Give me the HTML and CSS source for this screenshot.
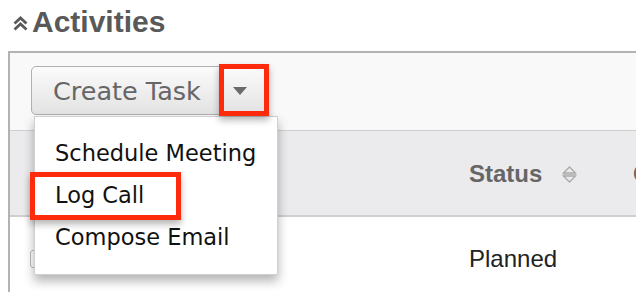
FILE: index.html
```html
<!DOCTYPE html>
<html>
<head>
<meta charset="utf-8">
<link rel="stylesheet" href="styles.css">
</head>
<body>
<div class="page">
  <h2 class="title">
    <svg class="chev" width="15" height="15" viewBox="0 0 15 15"><path d="M1.5 7.5 L7.5 2 L13.5 7.5 M1.5 13.5 L7.5 8 L13.5 13.5" fill="none" stroke="#5a5a5a" stroke-width="2.8"/></svg>
    <span>Activities</span>
  </h2>
  <div class="panel">
    <div class="toolbar">
      <div class="btn-group">
        <div class="btn">
          <span class="btn-label">Create Task</span>
          <span class="btn-caret"><svg width="14" height="8" viewBox="0 0 14 8"><path d="M0 0 H14 L7 8 Z" fill="#6a6a6a"/></svg></span>
        </div>
        <ul class="menu">
          <li>Schedule Meeting</li>
          <li>Log Call</li>
          <li>Compose Email</li>
        </ul>
        <div class="mark mark-caret"></div>
        <div class="mark mark-log"></div>
      </div>
    </div>
    <div class="thead">
      <div class="cell"></div>
      <div class="cell th">Status
        <svg class="sort" width="17" height="19" viewBox="0 0 17 19"><path d="M2.5 8 L8.5 2 L14.5 8 Z M2.5 11 L8.5 17 L14.5 11 Z" fill="none" stroke="#aaa" stroke-width="1.3"/><path d="M2 9.5 H15" stroke="#bbb" stroke-width="1"/></svg>
      </div>
      <div class="cell th">Contact</div>
    </div>
    <div class="trow">
      <div class="cell"><span class="check"></span></div>
      <div class="cell td">Planned</div>
      <div class="cell td"></div>
    </div>
  </div>
</div>
</body>
</html>
```
FILE: styles.css
```css
html, body {
  margin: 0;
  padding: 0;
  background: #fff;
}
.page {
  width: 636px;
  height: 292px;
  overflow: hidden;
}
.title {
  margin: 0;
  height: 51px;
  display: flex;
  align-items: center;
  gap: 4px;
  padding-left: 13px;
  padding-bottom: 7px;
  box-sizing: border-box;
  font-family: "Liberation Sans", Arial, sans-serif;
  font-weight: bold;
  font-size: 30px;
  color: #595959;
}
.chev {
  display: block;
  margin-top: 3px;
}
.panel {
  margin-left: 8px;
  border-left: 2px solid #b3b3b3;
  border-top: 2px solid #b3b3b3;
}
.toolbar {
  background: #f9f9f9;
  height: 77px;
  padding: 13px 0 0 21px;
  box-sizing: border-box;
}
.btn-group {
  position: relative;
  width: 235px;
}
.btn {
  display: flex;
  align-items: center;
  height: 49px;
  box-sizing: border-box;
  border: 1px solid #b0b0b0;
  border-radius: 5px;
  background: linear-gradient(#fbfbfb, #e3e3e3);
  font-family: "DejaVu Sans", "Lucida Grande", sans-serif;
  font-size: 25.5px;
  color: #666;
  white-space: nowrap;
}
.btn-label {
  padding-left: 21px;
  width: 188px;
  box-sizing: border-box;
}
.btn-caret {
  flex: 1;
  display: flex;
  justify-content: center;
  padding-right: 6px;
}
.btn-caret svg { display: block; }
.menu {
  position: absolute;
  left: 3px;
  top: 50px;
  width: 244px;
  height: 159px;
  box-sizing: border-box;
  margin: 0;
  padding: 15px 0 0 20px;
  list-style: none;
  background: #fff;
  border: 1px solid #d0d0d0;
  box-shadow: 0 6px 10px rgba(0,0,0,0.3);
  font-family: "DejaVu Sans", "Lucida Grande", sans-serif;
  font-size: 22.5px;
  color: #111;
  z-index: 2;
}
.menu li {
  height: 42px;
  line-height: 42px;
}
.mark {
  position: absolute;
  border: 5px solid #fd2a0c;
  box-sizing: border-box;
  box-shadow: 0 4px 7px rgba(0,0,0,0.3);
  z-index: 3;
}
.mark-caret {
  left: 188px;
  top: -2px;
  width: 50px;
  height: 52px;
}
.mark-log {
  left: -1px;
  top: 106px;
  width: 151px;
  height: 48px;
}
.thead {
  display: grid;
  grid-template-columns: 459px 164px 1fr;
  height: 87px;
  box-sizing: border-box;
  background: #ebebee;
  border-top: 1px solid #cfcfcf;
  border-bottom: 2px solid #cfcfcf;
  align-items: center;
  font-family: "Liberation Sans", Arial, sans-serif;
}
.th {
  font-weight: bold;
  font-size: 24px;
  color: #666;
  white-space: nowrap;
  display: flex;
  align-items: center;
  gap: 19px;
  padding-top: 2px;
}
.sort { display: block; }
.trow {
  display: grid;
  grid-template-columns: 459px 164px 1fr;
  height: 80px;
  align-items: center;
  font-family: "Liberation Sans", Arial, sans-serif;
}
.td {
  font-size: 24px;
  color: #222;
  padding-top: 4px;
}
.check {
  display: block;
  margin-left: 20px;
  width: 16px;
  height: 16px;
  border: 1px solid #bbb;
  border-radius: 3px;
  margin-top: 4px;
}
```
